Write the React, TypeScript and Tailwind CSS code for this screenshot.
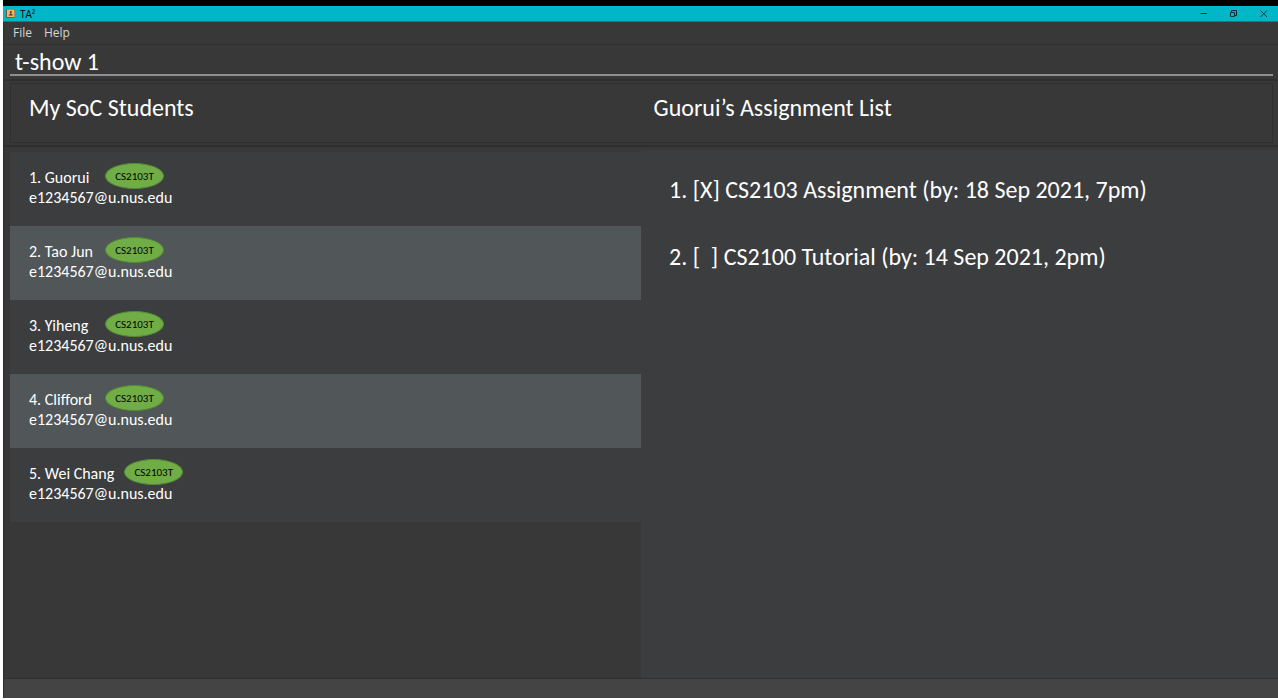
import React from "react";

const students = [
  { name: "Guorui", email: "e1234567@u.nus.edu", tag: "CS2103T" },
  { name: "Tao Jun", email: "e1234567@u.nus.edu", tag: "CS2103T" },
  { name: "Yiheng", email: "e1234567@u.nus.edu", tag: "CS2103T" },
  { name: "Clifford", email: "e1234567@u.nus.edu", tag: "CS2103T" },
  { name: "Wei Chang", email: "e1234567@u.nus.edu", tag: "CS2103T" },
];

const assignments = [
  { done: true, title: "CS2103 Assignment", due: "18 Sep 2021, 7pm" },
  { done: false, title: "CS2100 Tutorial", due: "14 Sep 2021, 2pm" },
];

function AppIcon() {
  return (
    <svg width="9" height="9" viewBox="0 0 9 9" aria-hidden="true">
      <rect width="9" height="9" rx="1" fill="#7a5a35" />
      <rect x="1" y="0.5" width="7.5" height="7.5" fill="#e6b877" />
      <circle cx="4.8" cy="3" r="1" fill="#4a3a28" />
      <path d="M2.8 6.4V5.7L4.3 5V3.5h1V5l1.5 0.7v0.7z" fill="#4a3a28" />
    </svg>
  );
}

function TitleBar() {
  return (
    <header className="flex h-4 items-center border-b border-[#26777d] bg-[#00b7c7] pl-[3px] text-black">
      <AppIcon />
      <h1 className="ml-[5px] flex-1 font-['Open_Sans',sans-serif] text-[10px] leading-none">TA²</h1>
      <div className="flex items-center gap-[22px] pr-2.5">
        <button aria-label="Minimize" className="block">
          <svg width="8" height="8" viewBox="0 0 8 8" fill="none" stroke="#073b40">
            <path d="M0.5 3.5h6.5" />
          </svg>
        </button>
        <button aria-label="Restore" className="block">
          <svg width="8" height="8" viewBox="0 0 8 8" fill="none" stroke="#062c30">
            <path d="M0.5 2.5h4v4h-4zM1.5 2.5V0.5h5v5h-2" />
          </svg>
        </button>
        <button aria-label="Close" className="block">
          <svg width="8" height="8" viewBox="0 0 8 8" fill="none" stroke="#073b40">
            <path d="M0.5 0.5l6.5 6.5M7 0.5l-6.5 6.5" />
          </svg>
        </button>
      </div>
    </header>
  );
}

export default function App() {
  return (
    <div className="flex min-h-screen flex-col bg-white pb-0.5 pl-[3px] font-['Carlito','Lato',sans-serif] text-white">
      <div className="h-1.5 bg-black" />
      <TitleBar />
      <div className="flex flex-1 flex-col border-l border-[#2d2d2d] bg-[#383838]">
        <nav className="flex h-[23px] items-center gap-3 border-b border-[#303030] pl-[9px] font-['Open_Sans',sans-serif] text-xs text-[#d6d6d6]">
          <button>File</button>
          <button>Help</button>
        </nav>
        <div className="border-b-2 border-[#2f2f2f] pr-[5px] pb-[3px] pl-1.5">
          <input
            aria-label="Command"
            defaultValue="t-show 1"
            className="block h-[31px] w-full border-b-2 border-[#8e908d] bg-transparent px-[5px] pt-[3px] text-2xl leading-[26px] outline-none"
          />
        </div>
        <div className="border-b-2 border-[#2f2f2f] pt-0.5 pr-[5px] pb-0.5 pl-1.5">
          <div className="grid h-[60px] grid-cols-2 border border-[#2f2f2f] pt-2 pl-[18px] text-2xl leading-8">
            <h2>My SoC Students</h2>
            <h2 className="pl-[3px]">Guorui’s Assignment List</h2>
          </div>
        </div>
        <main className="grid flex-1 grid-cols-2 pt-[3px]">
          <ul className="mt-0.5 ml-1.5 self-start text-base leading-[19px]">
            {students.map((s, i) => (
              <li key={i} className="h-[74px] bg-[#3c3d3f] pt-3 pl-[19px] even:bg-[#515658]">
                <div className="flex h-6 items-center gap-2.5">
                  <span className="min-w-[66px] pt-0.5">
                    {i + 1}. {s.name}
                  </span>
                  <span className="flex h-[26px] w-[59px] items-center justify-center rounded-[50%] border border-[#548c33] bg-[#70ad47] text-[11px] text-black">
                    {s.tag}
                  </span>
                </div>
                <p>{s.email}</p>
              </li>
            ))}
          </ul>
          <ol className="flex flex-col gap-[35px] bg-[#3c3d3f] pt-6 pl-7 text-2xl leading-8">
            {assignments.map((a, i) => (
              <li key={i} className="whitespace-pre">
                {`${i + 1}. [${a.done ? "X" : "  "}] ${a.title} (by: ${a.due})`}
              </li>
            ))}
          </ol>
        </main>
        <footer className="h-5 border-t border-[#303030] bg-[#444444]" />
      </div>
    </div>
  );
}
